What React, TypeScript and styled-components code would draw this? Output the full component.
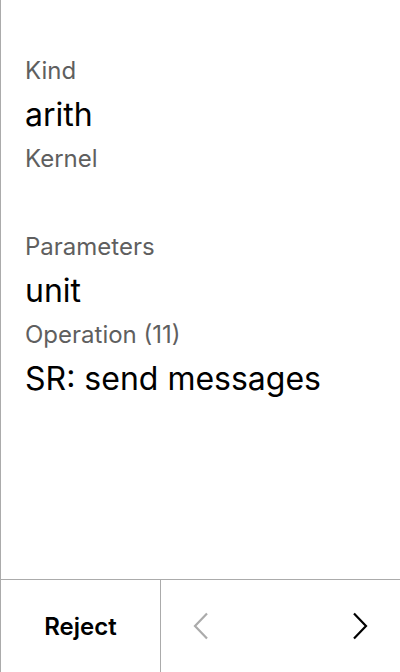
import styled, { createGlobalStyle } from "styled-components"

/** Styles */

const GlobalStyle = createGlobalStyle`
    html, body {
        margin: 0;
        padding: 0;
        background: #fff;
    }
    body {
        font-family: Inter, "Noto Sans", sans-serif;
        color: #000;
    }
`

const Screen = styled.div`
    box-sizing: border-box;
    width: 400px;
    height: 672px;
    display: flex;
    flex-direction: column;
    border-left: 1px solid #ababab;
    background: #fff;
`

const Details = styled.dl`
    flex: 1;
    margin: 0;
    display: flex;
    flex-direction: column;
    padding: 49px 24px 0;
`

const Label = styled.dt`
    font-size: 24px;
    line-height: 44px;
    height: 44px;
    color: #5f5f5f;
`

const Value = styled.dd`
    margin: 0;
    font-size: 32px;
    line-height: 44px;
    height: 44px;
    color: #000;
`

const ActionBar = styled.div`
    height: 92px;
    display: grid;
    grid-template-columns: 160px 1fr;
    border-top: 1px solid #ababab;
`

const RejectButton = styled.button`
    border: none;
    border-right: 1px solid #ababab;
    background: transparent;
    font-family: Inter, "Noto Sans", sans-serif;
    font-size: 24px;
    font-weight: 600;
    color: #000;
    padding: 0;
`

const Pager = styled.div`
    display: flex;
    align-items: center;
    justify-content: space-between;
    padding: 0 30px 0 30px;
`

const NavButton = styled.button<{ $disabled?: boolean }>`
    border: none;
    background: transparent;
    padding: 0;
    width: 20px;
    height: 30px;
    display: flex;
    align-items: center;
    justify-content: center;
    color: ${p => (p.$disabled ? "#ababab" : "#000")};
`

/** Component */

type Row = { label: string; value?: string }

const rows: Row[] = [
    { label: "Kind", value: "arith" },
    { label: "Kernel" },
    { label: "Parameters", value: "unit" },
    { label: "Operation (11)", value: "SR: send messages" },
]

const Chevron = ({ dir }: { dir: "left" | "right" }) => (
    <svg width="16" height="28" viewBox="0 0 16 28" fill="none">
        <path
            d={dir === "left" ? "M14 1.5 L2 14 L14 26.5" : "M2 1.5 L14 14 L2 26.5"}
            stroke="currentColor"
            strokeWidth="2.2"
        />
    </svg>
)

const App = () => (
    <>
        <GlobalStyle />
        <Screen>
            <Details>
                {rows.map(r => (
                    <div key={r.label}>
                        <Label>{r.label}</Label>
                        <Value>{r.value ?? ""}</Value>
                    </div>
                ))}
            </Details>
            <ActionBar>
                <RejectButton>Reject</RejectButton>
                <Pager>
                    <NavButton $disabled aria-label="Previous">
                        <Chevron dir="left" />
                    </NavButton>
                    <NavButton aria-label="Next">
                        <Chevron dir="right" />
                    </NavButton>
                </Pager>
            </ActionBar>
        </Screen>
    </>
)

/** Exports */

export default App
